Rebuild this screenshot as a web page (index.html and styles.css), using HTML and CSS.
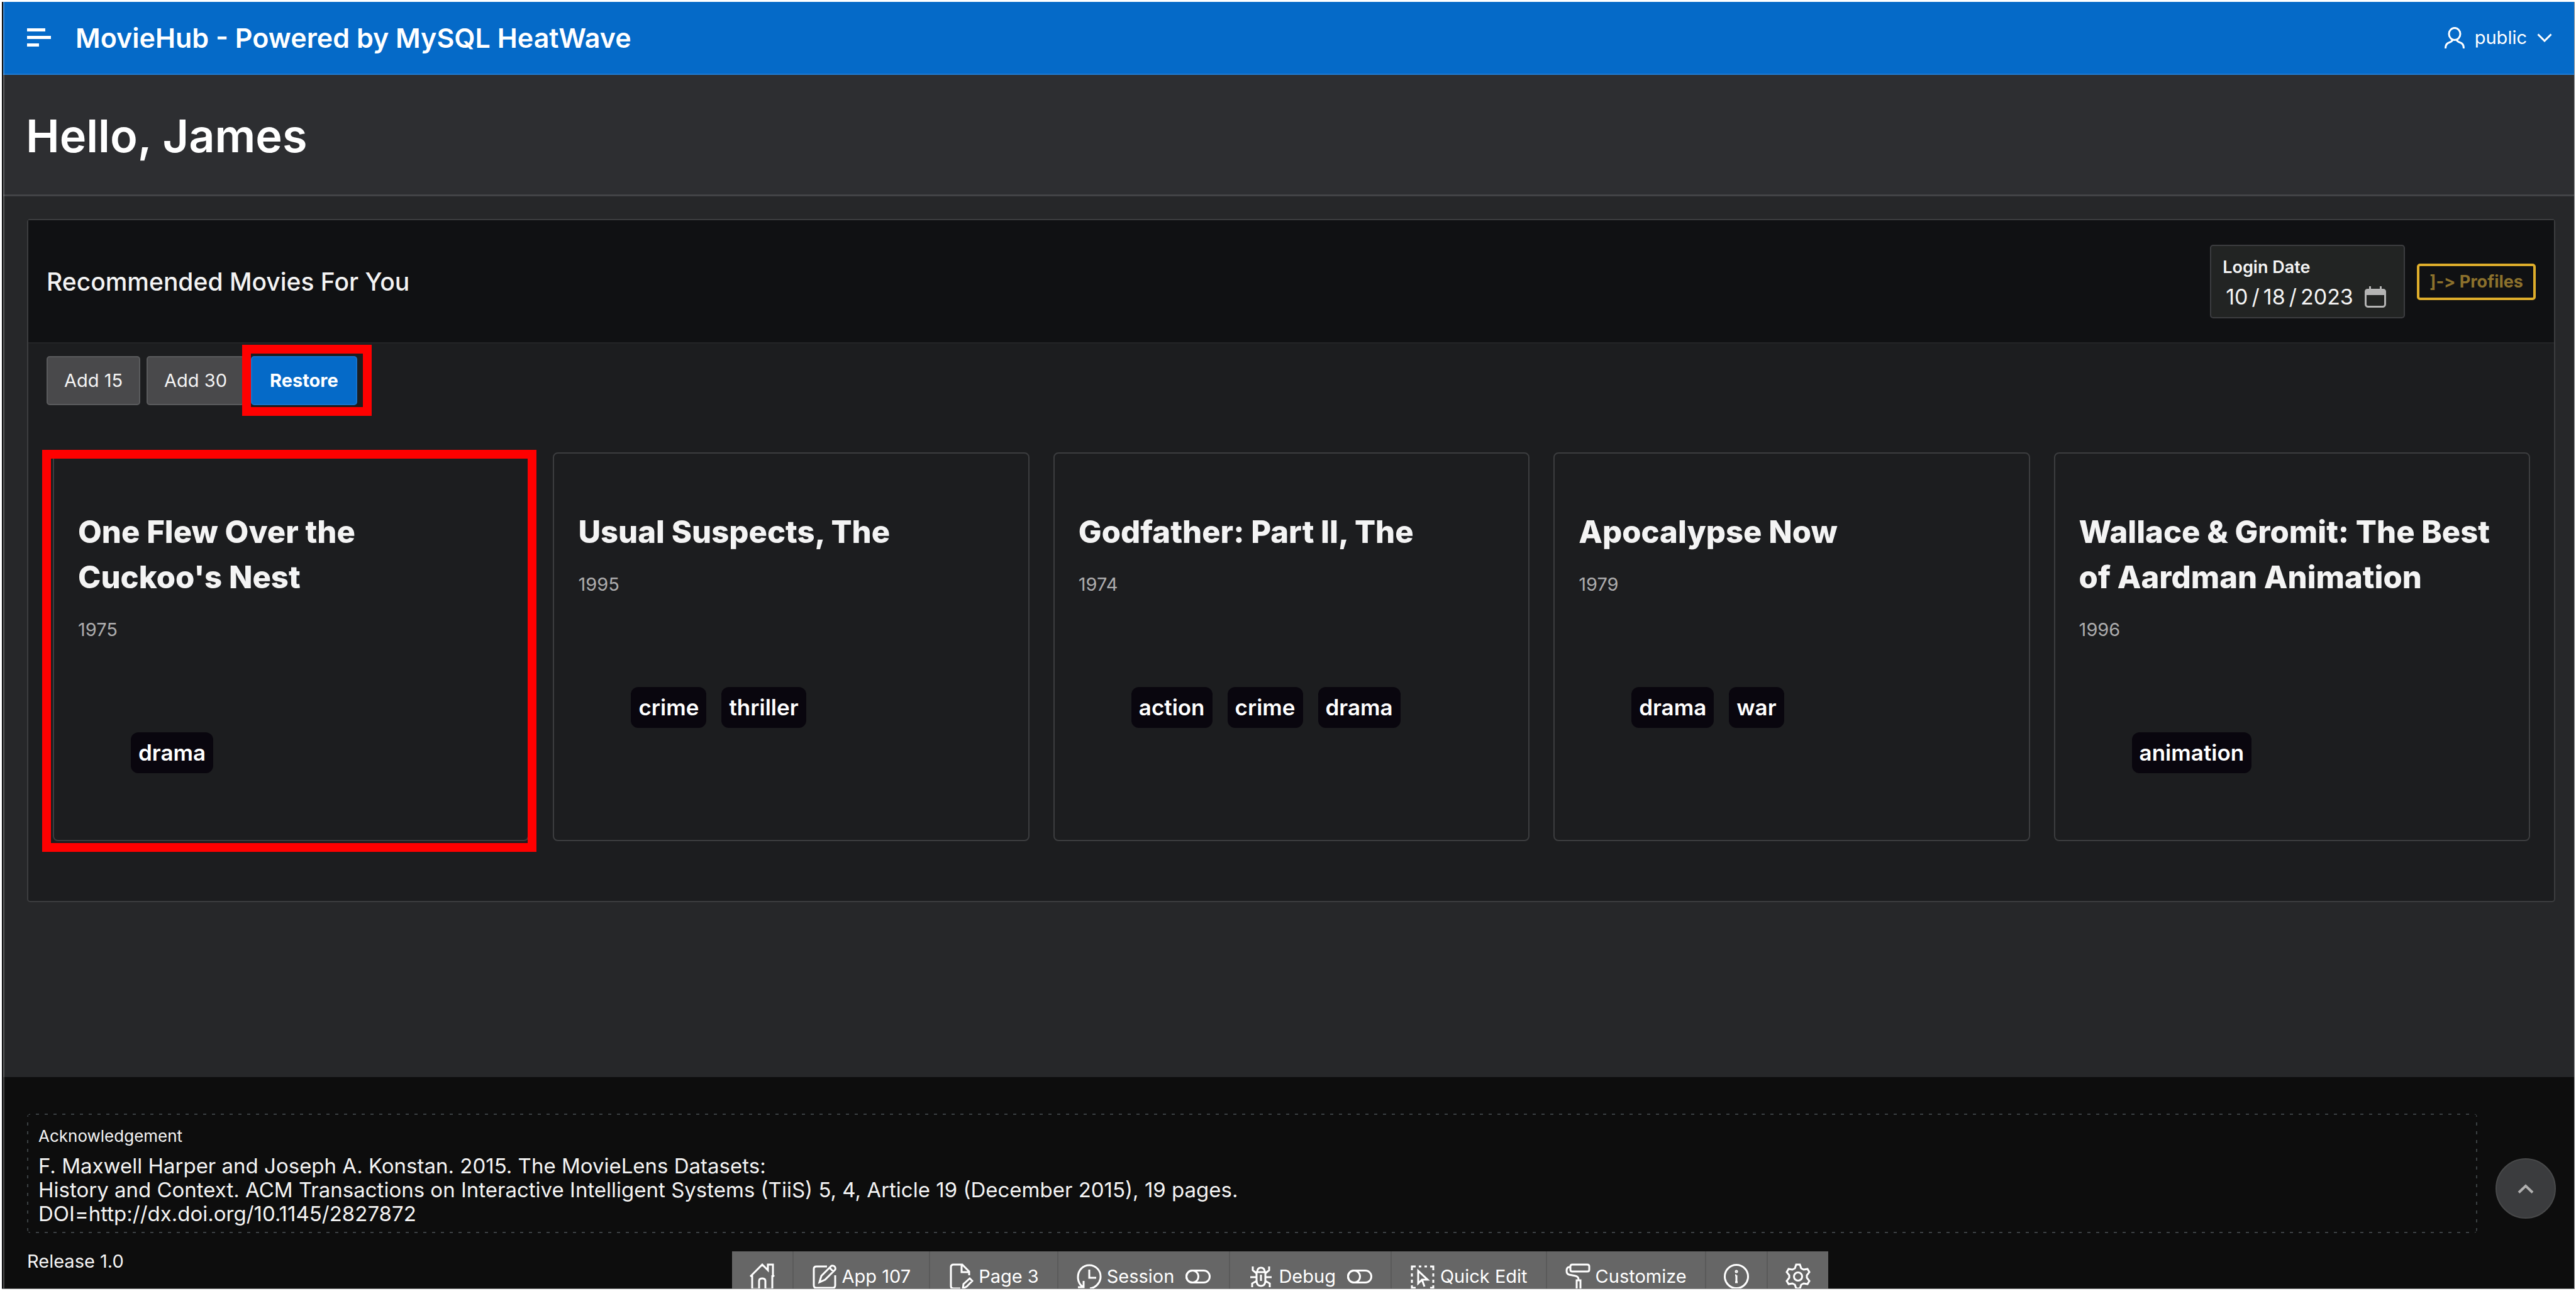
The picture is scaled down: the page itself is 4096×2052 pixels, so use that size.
FILE: index.html
```html
<!DOCTYPE html>
<html lang="en">
<head>
<meta charset="utf-8">
<title>MovieHub - Powered by MySQL HeatWave</title>
<link rel="stylesheet" href="styles.css">
</head>
<body>
<div class="app">
  <header class="topbar">
    <button class="menu-btn" aria-label="Toggle navigation">
      <svg class="menu-icon" viewBox="0 0 38 30" aria-hidden="true"><rect x="0" y="0" width="29" height="5"/><rect x="0" y="12" width="38" height="5"/><rect x="0" y="24" width="19" height="5"/></svg>
    </button>
    <a class="brand" href="#">MovieHub - Powered by MySQL HeatWave</a>
    <button class="user-btn">
      <svg class="user-icon" viewBox="0 0 32 34" aria-hidden="true"><ellipse cx="16" cy="11" rx="9" ry="9.6"/><path d="M1.5 34c0-6 2.500-8.500 6-9.500 2.500-.8 4.500-2 5.500-4.300M30.500 34c0-6-2.500-8.500-6-9.500-2.500-.8-4.500-2-5.500-4.300"/></svg>
      <span>public</span>
      <svg class="chevron-icon" viewBox="0 0 24 14" aria-hidden="true"><path d="M1.500 1.500 12 12 22.500 1.500"/></svg>
    </button>
  </header>

  <section class="hero"><h1>Hello, James</h1></section>

  <main class="content">
    <section class="panel">
      <div class="panel-head">
        <h2>Recommended Movies For You</h2>
        <div class="date-field">
          <label for="login-date">Login Date</label>
          <div class="date-row">
            <input type="date" id="login-date" value="2023-10-18">
            <svg class="calendar-icon" viewBox="0 0 34 34" aria-hidden="true"><path class="fill" d="M5 4h2V0h3v4h14V0h3v4h2q5 0 5 5v5H0V9q0-5 5-5z"/><rect x="1.500" y="6" width="31" height="26.500" rx="4"/></svg>
          </div>
        </div>
        <button class="profiles-btn">]-&gt; Profiles</button>
      </div>
      <div class="panel-body">
        <div class="actions">
          <button class="btn">Add 15</button>
          <button class="btn">Add 30</button>
          <button class="btn btn-hot marked">Restore</button>
        </div>
        <div class="cards">
          <article class="card marked">
            <h3>One Flew Over the Cuckoo's Nest</h3>
            <p class="year">1975</p>
            <div class="tags"><span>drama</span></div>
          </article>
          <article class="card">
            <h3>Usual Suspects, The</h3>
            <p class="year">1995</p>
            <div class="tags"><span>crime</span><span>thriller</span></div>
          </article>
          <article class="card">
            <h3>Godfather: Part II, The</h3>
            <p class="year">1974</p>
            <div class="tags"><span>action</span><span>crime</span><span>drama</span></div>
          </article>
          <article class="card">
            <h3>Apocalypse Now</h3>
            <p class="year">1979</p>
            <div class="tags"><span>drama</span><span>war</span></div>
          </article>
          <article class="card">
            <h3>Wallace &amp; Gromit: The Best of Aardman Animation</h3>
            <p class="year">1996</p>
            <div class="tags"><span>animation</span></div>
          </article>
        </div>
      </div>
    </section>
  </main>

  <footer class="footer">
    <div class="footer-row">
      <div class="ack">
        <p class="ack-label">Acknowledgement</p>
        <p class="ack-text">F. Maxwell Harper and Joseph A. Konstan. 2015. The MovieLens Datasets:<br>History and Context. ACM Transactions on Interactive Intelligent Systems (TiiS) 5, 4, Article 19 (December 2015), 19 pages.<br>DOI=http://dx.doi.org/10.1145/2827872</p>
      </div>
      <button class="top-btn" aria-label="Start of page">
        <svg viewBox="0 0 26 15" aria-hidden="true"><path d="M2 13.500 13 3l11 10.500"/></svg>
      </button>
    </div>
    <p class="release">Release 1.0</p>
  </footer>

  <nav class="devbar" aria-label="Developer toolbar">
    <button class="solo" aria-label="Home">
      <svg viewBox="0 0 40 42" aria-hidden="true"><path d="M1 21 20 2l9 9V2h8v17l2 2M4 19v22h11V28q0-4 5-4t5 4v13h11V19"/></svg>
    </button>
    <button>
      <svg viewBox="0 0 40 42" aria-hidden="true"><path d="M24 5H7q-4 0-4 4v26q0 4 4 4h26q4 0 4-4V19M12 30l3-10L31 4q3-1 5 1t1 5L21 26zM28 7l6 6"/></svg>
      <span>App 107</span>
    </button>
    <button>
      <svg viewBox="0 0 40 42" aria-hidden="true"><path d="M19 40H8q-4 0-4-4V6q0-4 4-4h14l11 11v6M21 3v11h11M23 40l1-7 10-9 4 4-9 9z"/></svg>
      <span>Page 3</span>
    </button>
    <button>
      <svg viewBox="0 0 40 42" aria-hidden="true"><path d="M9 37C4 33 2 28 2 22 2 11 10 3 20 3s18 8 18 18-8 18-17 19M20 10v13h11M11 28v10H2"/></svg>
      <span>Session</span>
      <svg class="toggle" viewBox="0 0 40 22" aria-hidden="true"><rect x="1.500" y="1.500" width="37" height="19" rx="9.500"/><circle cx="11" cy="11" r="9.500"/></svg>
    </button>
    <button>
      <svg viewBox="0 0 40 42" aria-hidden="true"><path d="M13 14h14v13q0 9-7 9t-7-9zM14 14q0-7 6-7t6 7M7 5v6l6 5M33 5v6l-6 5M3 22h9M28 22h9M6 38v-6l7-4M34 38v-6l-7-4M20 18v10"/></svg>
      <span>Debug</span>
      <svg class="toggle" viewBox="0 0 40 22" aria-hidden="true"><rect x="1.500" y="1.500" width="37" height="19" rx="9.500"/><circle cx="11" cy="11" r="9.500"/></svg>
    </button>
    <button>
      <svg viewBox="0 0 40 42" aria-hidden="true"><path d="M3 11V5h6M14 5h4M23 5h4M32 5h5v6M37 16v5M37 26v5M3 16v5M3 26v5M3 35v4h6M37 35v4h-5M13 12v20l6-6h9zM19 26l4 11"/></svg>
      <span>Quick Edit</span>
    </button>
    <button>
      <svg viewBox="0 0 40 42" aria-hidden="true"><path d="M11 2h24q3 0 3 3v5q0 3-3 3H11q-3 0-3-3V5q0-3 3-3zM8 6H6q-4 0-4 6 0 5 4 6l10 2q5 1 5 6M18 27h6v14q-3 3-6 0z"/></svg>
      <span>Customize</span>
    </button>
    <button class="solo" aria-label="Help">
      <svg viewBox="0 0 40 42" aria-hidden="true"><circle cx="20" cy="21" r="18.500"/><path d="M20 19v11M18 19h2M18 30h4"/><circle cx="20" cy="13" r="1"/></svg>
    </button>
    <button class="solo" aria-label="Settings">
      <svg viewBox="0 0 40 42" aria-hidden="true"><circle cx="20" cy="21" r="6.500"/><path d="M17 2h6l2 6 4 2 6-1 3 5-4 5v4l4 5-3 5-6-1-4 2-2 6h-6l-2-6-4-2-6 1-3-5 4-5v-4l-4-5 3-5 6 1 4-2z"/></svg>
    </button>
  </nav>
</div>
</body>
</html>
```

FILE: styles.css
```css
* {
  box-sizing: border-box;
}

body {
  margin: 0;
  background: #fff;
  color: #f4f4f4;
  font-family: Inter, "Liberation Sans", sans-serif;
  font-size: 29px;
  line-height: 38px;
}

h1, h2, h3, p {
  margin: 0;
}

button, input {
  margin: 0;
  font: inherit;
  color: inherit;
}

button {
  padding: 0;
  border: 0;
  background: none;
}

svg {
  display: block;
  flex: none;
  fill: none;
  stroke: currentColor;
}

.app {
  position: relative;
  display: flex;
  flex-direction: column;
  min-height: 100vh;
  border: solid #fff;
  border-width: 3px 2px 3px 3px;
  background: #262729;
}

/* Window edge */
.app::after {
  content: "";
  position: absolute;
  inset: 0;
  border: solid #8a8b8c;
  border-width: 0 1px 1px 0;
  box-shadow: inset 2px 0 #0b0b0c, inset 4px 0 rgba(255, 255, 255, 0.25);
  pointer-events: none;
}

/* Top bar */
.topbar {
  display: flex;
  align-items: center;
  height: 116px;
  padding: 0 36px 0 40px;
  border-bottom: 2px solid #1f7bd3;
  background: #056ac8;
  color: #fff;
}

.menu-icon {
  width: 38px;
  height: 30px;
  fill: #fff;
  stroke: none;
}

.brand {
  margin-left: 39px;
  color: inherit;
  font-size: 43px;
  font-weight: 600;
  text-decoration: none;
}

.user-btn {
  display: flex;
  align-items: center;
  gap: 16px;
  margin-left: auto;
}

.user-icon {
  width: 32px;
  height: 34px;
  stroke-width: 3;
}

.chevron-icon {
  width: 24px;
  height: 14px;
  stroke-width: 3;
}

/* Greeting */
.hero {
  padding: 51px 38px 47px;
  border-bottom: 3px solid #434447;
  background: #2d2e31;
}

.hero h1 {
  color: #fff;
  font-size: 72px;
  font-weight: 600;
  line-height: 92px;
}

/* Recommendations panel */
.content {
  flex: 1;
  padding: 36px 31px 40px 40px;
}

.panel {
  border: 2px solid #3c3d3f;
  border-radius: 5px;
  background: #1c1d1f;
}

.panel-head {
  display: flex;
  align-items: center;
  gap: 19px;
  padding: 39px 29px 38px;
  border-bottom: 2px solid #232426;
  background: #101113;
}

.panel-head h2 {
  flex: 1;
  font-size: 39px;
  font-weight: 500;
}

.date-field {
  padding: 15px 18px 12px;
  border: 2px solid #3c3d40;
  border-radius: 5px;
  background: #222423;
}

.date-field label {
  display: block;
  font-size: 27px;
  font-weight: 600;
}

.date-row {
  display: flex;
  align-items: center;
  gap: 14px;
  padding: 8px 10px 0 4px;
}

.date-row input {
  width: 208px;
  height: 40px;
  padding: 0;
  border: 0;
  background: none;
  font-size: 34px;
  line-height: 38px;
}

.date-row input::-webkit-calendar-picker-indicator {
  display: none;
}

.date-row input::-webkit-datetime-edit-text {
  padding: 0 5px;
}

.calendar-icon {
  width: 34px;
  height: 34px;
  color: #b4b4b4;
  stroke-width: 3;
}

.calendar-icon .fill {
  fill: currentColor;
  stroke: none;
}

.profiles-btn {
  padding: 6px 16px;
  border: 4px solid #dfae2b;
  border-radius: 5px;
  color: #8c712c;
  font-size: 27px;
  font-weight: 700;
  font-variant-ligatures: none;
}

.panel-body {
  padding: 20px 38px 95px 39px;
}

.actions {
  display: flex;
  gap: 10px;
  margin-left: -10px;
}

.btn {
  position: relative;
  padding: 18px 26px;
  border: 2px solid #5a5b5d;
  border-radius: 5px;
  background: #49494b;
}

.btn-hot {
  padding: 18px 28px;
  border-color: #1673cc;
  background: #056ac8;
  color: #fff;
  font-weight: 700;
}

.cards {
  display: grid;
  grid-template-columns: repeat(5, 1fr);
  gap: 38px;
  margin-top: 75px;
}

.card {
  position: relative;
  padding: 89px 38px 106px;
  border: 2px solid #3c3d3f;
  border-radius: 8px;
}

.card h3 {
  font-size: 49px;
  font-weight: 800;
  line-height: 72px;
}

.year {
  margin-top: 28px;
  color: #acacad;
}

.tags {
  display: flex;
  gap: 24px;
  margin: 144px 0 0 84px;
}

.tags span {
  padding: 13px 12px 14px;
  border-radius: 12px;
  background: #09060e;
  color: #fff;
  font-size: 35px;
  font-weight: 600;
}

/* Red frames that call out an element */
.marked::after {
  content: "";
  position: absolute;
  border: 14px solid #f00;
}

.btn.marked::after {
  inset: -20px -25px -19px -16px;
}

.card.marked::after {
  inset: -6px -14px -19px -19px;
}

/* Footer */
.footer {
  padding: 58px 30px 25px 40px;
  background: #0d0d0d;
}

.footer-row {
  display: flex;
  align-items: center;
  gap: 29px;
}

.ack {
  --dash: #3b4043 0 5px, transparent 5px 14px;
  flex: 1;
  padding: 17px 18px 12px;
  border-radius: 6px;
  background:
    repeating-linear-gradient(90deg, var(--dash)) top / 100% 2px no-repeat,
    repeating-linear-gradient(90deg, var(--dash)) bottom / 100% 2px no-repeat,
    repeating-linear-gradient(180deg, var(--dash)) left / 2px 100% no-repeat,
    repeating-linear-gradient(180deg, var(--dash)) right / 2px 100% no-repeat;
}

.ack-label {
  margin-bottom: 9px;
  font-size: 26px;
}

.ack-text {
  font-size: 33px;
}

.top-btn {
  display: grid;
  place-items: center;
  width: 96px;
  height: 96px;
  margin-top: 48px;
  border: 2px solid #48494a;
  border-radius: 50%;
  background: #3b3c3e;
  color: #b0b0b0;
}

.top-btn svg {
  width: 26px;
  height: 15px;
  stroke-width: 4;
}

.release {
  margin-top: 26px;
}

/* Developer toolbar, pinned to the bottom edge */
.devbar {
  position: absolute;
  bottom: 0;
  left: 50%;
  display: flex;
  height: 60px;
  margin-left: -885px;
  overflow: hidden;
  background: #666;
  color: #fff;
}

.devbar button {
  display: flex;
  align-items: center;
  gap: 8px;
  height: 80px;
  padding: 0 29px;
  border-right: 2px solid #5a5a5a;
}

.devbar .solo {
  padding: 0 28px;
}

.devbar button:last-child {
  border-right: 0;
}

.devbar svg {
  width: 40px;
  height: 42px;
  stroke-width: 3;
}

.devbar .toggle {
  width: 40px;
  height: 22px;
  margin-left: 10px;
}
```
